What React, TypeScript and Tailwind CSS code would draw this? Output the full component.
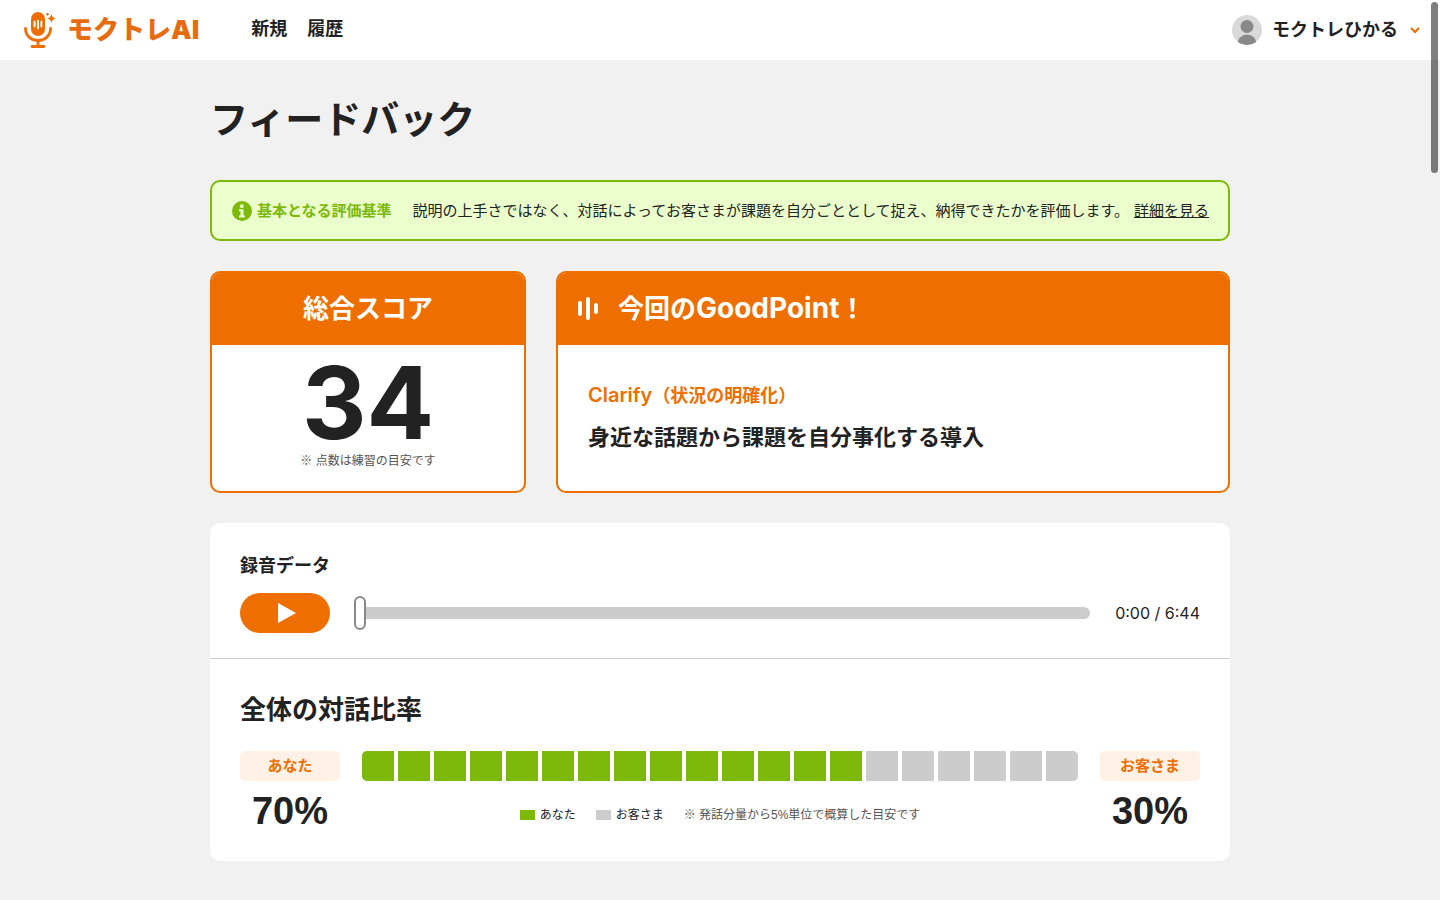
import { useState } from "react";

const TOTAL_SEGMENTS = 20;
const YOU_RATIO = 70;

const navItems = ["新規", "履歴"];

const LogoMark = () => (
  <svg width="32" height="36" viewBox="0 0 32 36" fill="none" aria-hidden="true">
    <rect x="7" y="0" width="14" height="24" rx="7" fill="#ee6e00" />
    <path d="M10.600 9.800v4.600M14 8.800v7.400M17.400 9.800v4.600" stroke="#fff" strokeWidth="1.900" strokeLinecap="round" />
    <path d="M1.500 16.500C1.500 23.500 7 28.500 14 28.500S26.500 23.500 26.500 16.500" stroke="#ee6e00" strokeWidth="2.800" strokeLinecap="round" />
    <path d="M14 28.500V34M8 34.500H20" stroke="#ee6e00" strokeWidth="2.800" strokeLinecap="round" />
    <path d="M27.500 2Q28.200 5.800 32 6.500Q28.200 7.200 27.500 11Q26.800 7.200 23 6.500Q26.800 5.800 27.500 2Z" fill="#ee6e00" />
    <path d="M23.500 .3Q23.900 1.800 25.400 2.200Q23.900 2.600 23.500 4.100Q23.100 2.600 21.600 2.200Q23.100 1.800 23.500 .3Z" fill="#ee6e00" />
  </svg>
);

const InfoIcon = () => (
  <svg width="20" height="20" viewBox="0 0 20 20" className="shrink-0" aria-hidden="true">
    <circle cx="10" cy="10" r="10" fill="#7cb90a" />
    <circle cx="9.800" cy="5.200" r="1.900" fill="#eaffcc" />
    <path d="M7 8.200H11.500V14.500H13V16.500H7V14.500H8.500V10.200H7Z" fill="#eaffcc" />
  </svg>
);

const Header = () => (
  <header className="flex h-[60px] items-center bg-white pl-6 pr-[19px]">
    <a href="#" className="flex items-center gap-[11px]">
      <LogoMark />
      <span className="font-['Inter','Noto_Sans_CJK_JP',sans-serif] text-[26px] leading-9 font-black text-[#e76c10]">
        モクトレAI
      </span>
    </a>
    <nav className="ml-[52px] flex gap-5 pb-[2px]">
      {navItems.map((item) => (
        <a key={item} href="#" className="text-lg leading-6 font-bold">
          {item}
        </a>
      ))}
    </nav>
    <button type="button" className="ml-auto flex items-center gap-[10px] text-lg leading-6 font-bold">
      <svg width="30" height="30" viewBox="0 0 30 30" aria-hidden="true">
        <clipPath id="avatar">
          <circle cx="15" cy="15" r="15" />
        </clipPath>
        <g clipPath="url(#avatar)">
          <rect width="30" height="30" fill="#d9d9d9" />
          <circle cx="15" cy="11.500" r="6.500" fill="#888" />
          <circle cx="15" cy="29" r="9.500" fill="#888" />
        </g>
      </svg>
      モクトレひかる
      <svg width="12" height="12" viewBox="0 0 12 12" fill="none" className="ml-px" aria-hidden="true">
        <path d="M2 4L6 8L10 4" stroke="#ee6e00" strokeWidth="2" />
      </svg>
    </button>
  </header>
);

const Criteria = () => (
  <section className="mt-8 flex items-center rounded-[10px] border-2 border-[#7cb90a] bg-[#ebffcd] py-[17px] pr-[19px] pl-5 text-[15px] leading-[23px]">
    <InfoIcon />
    <strong className="ml-[5px] shrink-0 font-bold text-[#7cb90a]">基本となる評価基準</strong>
    <p className="ml-[21px]">説明の上手さではなく、対話によってお客さまが課題を自分ごととして捉え、納得できたかを評価します。</p>
    <a href="#" className="ml-auto shrink-0 underline">
      詳細を見る
    </a>
  </section>
);

const ScoreCard = () => (
  <section className="w-[316px] shrink-0 overflow-hidden rounded-[10px] border-2 border-[#ee6e00] bg-white text-center">
    <h2 className="bg-[#ee6e00] py-4 text-[26px] leading-10 font-bold text-white">総合スコア</h2>
    <p className="pt-2 font-['Inter',sans-serif] text-[100px] leading-[100px] font-bold">34</p>
    <p className="pb-[22px] text-xs leading-4 text-[#555]">※ 点数は練習の目安です</p>
  </section>
);

const GoodPointCard = () => (
  <section className="flex-1 overflow-hidden rounded-[10px] border-2 border-[#ee6e00] bg-white">
    <h2 className="flex items-center gap-5 bg-[#ee6e00] px-5 py-4 text-[26px] leading-10 font-bold text-white">
      <svg width="20" height="24" viewBox="0 0 20 24" fill="#fff" aria-hidden="true">
        <rect x="0" y="4" width="4" height="15" rx="2" />
        <rect x="8" y="0" width="4" height="23" rx="2" />
        <rect x="16" y="6" width="4" height="11" rx="2" />
      </svg>
      <span>
        今回の<span className="font-['Inter',sans-serif] text-[28px] leading-none">GoodPoint</span>！
      </span>
    </h2>
    <div className="px-[30px] pt-[37px]">
      <p className="text-lg leading-7 font-bold text-[#ee6e00]">
        <span className="font-['Inter',sans-serif] text-xl leading-none font-semibold">Clarify</span>（状況の明確化）
      </p>
      <p className="mt-3 text-[22px] leading-8 font-bold">身近な話題から課題を自分事化する導入</p>
    </div>
  </section>
);

const Player = () => {
  const [playing, setPlaying] = useState(false);
  const [position, setPosition] = useState(0);

  return (
    <div className="border-b border-[#ccc] px-[30px] pt-[29px] pb-[25px]">
      <label htmlFor="seek" className="block text-lg leading-7 font-bold">
        録音データ
      </label>
      <div className="mt-[13px] flex items-center">
        <button
          type="button"
          aria-label="再生"
          aria-pressed={playing}
          onClick={() => setPlaying(!playing)}
          className="flex h-10 w-[90px] items-center justify-center rounded-full bg-[#ee6e00]"
        >
          <svg width="18" height="20" viewBox="0 0 18 20" className="ml-1" aria-hidden="true">
            <path d="M0 0L18 10L0 20Z" fill="#fff" />
          </svg>
        </button>
        <input
          id="seek"
          type="range"
          min={0}
          max={404}
          value={position}
          onChange={(event) => setPosition(Number(event.target.value))}
          className="ml-6 h-3 flex-1 appearance-none rounded-full bg-[#ccc] [&::-webkit-slider-thumb]:h-[34px] [&::-webkit-slider-thumb]:w-3 [&::-webkit-slider-thumb]:appearance-none [&::-webkit-slider-thumb]:rounded-full [&::-webkit-slider-thumb]:border-2 [&::-webkit-slider-thumb]:border-[#888] [&::-webkit-slider-thumb]:bg-white"
        />
        <span className="w-[110px] text-right font-['Inter',sans-serif] text-base leading-6">0:00 / 6:44</span>
      </div>
    </div>
  );
};

const Speaker = ({ name, ratio }: { name: string; ratio: number }) => (
  <div className="w-[100px] shrink-0 text-center font-bold">
    <p className="rounded-[5px] bg-[#fff1e5] text-[15px] leading-[30px] text-[#ee6e00]">{name}</p>
    <p className="mt-[10px] text-[38px] leading-10">{ratio}%</p>
  </div>
);

const TalkRatio = () => (
  <div className="px-[30px] pt-[31px] pb-[30px]">
    <h2 className="text-[26px] leading-10 font-bold">全体の対話比率</h2>
    <div className="mt-[21px] flex gap-[22px]">
      <Speaker name="あなた" ratio={YOU_RATIO} />
      <div className="flex-1">
        <div className="flex h-[30px] gap-1 overflow-hidden rounded-[5px]">
          {Array.from({ length: TOTAL_SEGMENTS }, (_, i) => (
            <span
              key={i}
              className={i < (YOU_RATIO / 100) * TOTAL_SEGMENTS ? "flex-1 bg-[#7cb90a]" : "flex-1 bg-[#ccc]"}
            />
          ))}
        </div>
        <div className="mt-[26px] flex justify-center gap-5 text-xs leading-4">
          <span className="flex items-center gap-[5px]">
            <i className="h-[10px] w-[15px] bg-[#7cb90a]" />
            あなた
          </span>
          <span className="flex items-center gap-[5px]">
            <i className="h-[10px] w-[15px] bg-[#ccc]" />
            お客さま
          </span>
          <span className="text-[#555]">※ 発話分量から5%単位で概算した目安です</span>
        </div>
      </div>
      <Speaker name="お客さま" ratio={100 - YOU_RATIO} />
    </div>
  </div>
);

export default function App() {
  return (
    <div
      lang="ja"
      className="min-h-screen bg-[#f1f1f1] font-['Liberation_Sans','Noto_Sans_CJK_JP',sans-serif] text-[#222]"
    >
      <Header />
      <main className="mx-auto max-w-[1020px] pt-8 pb-9">
        <h1 className="text-[38px] leading-14 font-bold">フィードバック</h1>
        <Criteria />
        <div className="mt-[30px] flex gap-[30px]">
          <ScoreCard />
          <GoodPointCard />
        </div>
        <section className="mt-[30px] rounded-[10px] bg-white">
          <Player />
          <TalkRatio />
        </section>
      </main>
      {/* overlay scroll thumb */}
      <div className="fixed top-[2px] right-[2px] h-[171px] w-[7px] rounded-full bg-black/50" />
    </div>
  );
}
